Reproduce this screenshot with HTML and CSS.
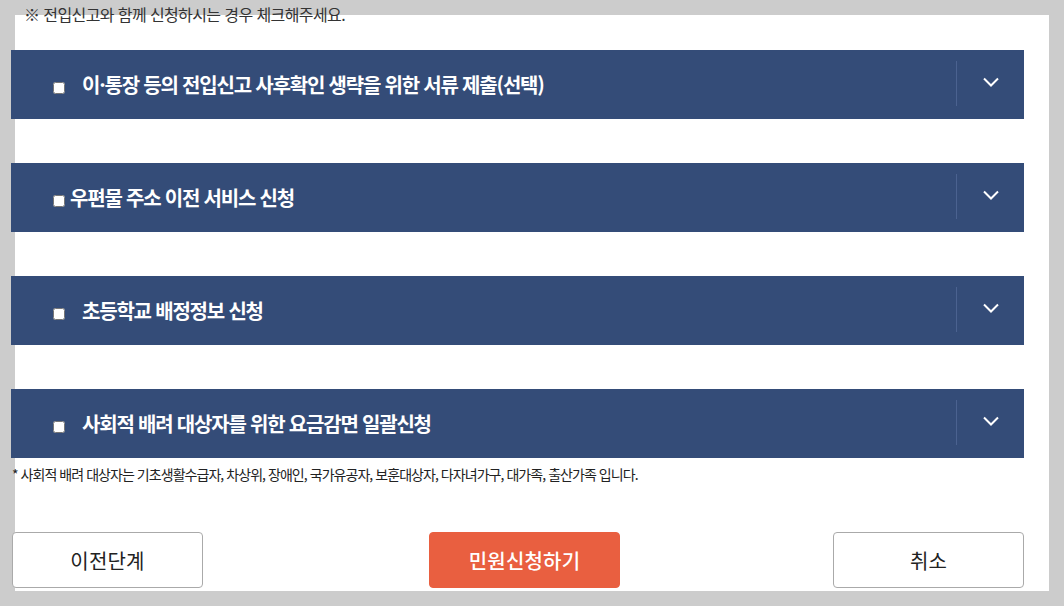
FILE: index.html
```html
<!DOCTYPE html>
<html lang="ko">
<head>
<meta charset="utf-8">
<title>민원신청</title>
<link rel="stylesheet" href="styles.css">
</head>
<body>
<div class="panel">
  <p class="note">※ 전입신고와 함께 신청하시는 경우 체크해주세요.</p>
  <div class="content">
    <ul class="bars">
      <li class="bar">
        <label class="bar-label"><input type="checkbox" class="chk"><span class="bar-title spaced">이·통장 등의 전입신고 사후확인 생략을 위한 서류 제출(선택)</span></label>
        <span class="toggle"><svg width="16" height="10" viewBox="0 0 16 10"><polyline points="1,1.5 8,8.5 15,1.5" fill="none" stroke="#fff" stroke-width="2"/></svg></span>
      </li>
      <li class="bar">
        <label class="bar-label"><input type="checkbox" class="chk"><span class="bar-title tight">우편물 주소 이전 서비스 신청</span></label>
        <span class="toggle"><svg width="16" height="10" viewBox="0 0 16 10"><polyline points="1,1.5 8,8.5 15,1.5" fill="none" stroke="#fff" stroke-width="2"/></svg></span>
      </li>
      <li class="bar">
        <label class="bar-label"><input type="checkbox" class="chk"><span class="bar-title spaced">초등학교 배정정보 신청</span></label>
        <span class="toggle"><svg width="16" height="10" viewBox="0 0 16 10"><polyline points="1,1.5 8,8.5 15,1.5" fill="none" stroke="#fff" stroke-width="2"/></svg></span>
      </li>
      <li class="bar">
        <label class="bar-label"><input type="checkbox" class="chk"><span class="bar-title spaced">사회적 배려 대상자를 위한 요금감면 일괄신청</span></label>
        <span class="toggle"><svg width="16" height="10" viewBox="0 0 16 10"><polyline points="1,1.5 8,8.5 15,1.5" fill="none" stroke="#fff" stroke-width="2"/></svg></span>
      </li>
    </ul>
    <p class="footnote">* 사회적 배려 대상자는 기초생활수급자, 차상위, 장애인, 국가유공자, 보훈대상자, 다자녀가구, 대가족, 출산가족 입니다.</p>
    <div class="actions">
      <button class="btn btn-line">이전단계</button>
      <button class="btn btn-main">민원신청하기</button>
      <button class="btn btn-line btn-right">취소</button>
    </div>
  </div>
</div>
</body>
</html>
```
FILE: styles.css
```css
* { box-sizing: border-box; }
html, body { margin: 0; padding: 0; }
body {
  background: #cccccc;
  font-family: "Noto Sans CJK KR", "Noto Sans", sans-serif;
  color: #222;
}
.panel {
  display: flex;
  flex-direction: column;
  margin: 15px 15px 0 15px;
  background: #ffffff;
  padding-bottom: 3px;
}
.note {
  margin: -12px 0 0 9px;
  font-size: 16px;
  line-height: 22px;
  letter-spacing: -0.6px;
  color: #333;
}
.content {
  margin-left: -4px;
  width: 1013px;
}
.bars {
  list-style: none;
  margin: 25px 0 0 0;
  padding: 0;
  display: flex;
  flex-direction: column;
  gap: 44px;
}
.bar {
  height: 69px;
  background: #344c78;
  display: flex;
  align-items: center;
  justify-content: space-between;
}
.bar-label {
  display: flex;
  align-items: center;
  padding-left: 42px;
}
.chk {
  width: 12px;
  height: 12px;
  margin: 7px 0 0 0;
}
.bar-title {
  color: #fff;
  font-weight: 700;
  font-size: 20px;
  letter-spacing: -1.2px;
}
.spaced { margin-left: 17px; }
.tight { margin-left: 5px; }
.toggle {
  width: 68px;
  height: 45px;
  border-left: 1px solid #4b6290;
  display: flex;
  align-items: center;
  justify-content: center;
  margin-top: -2px;
  padding-bottom: 3px;
}
.toggle svg { display: block; }
.footnote {
  margin: 7px 0 0 1px;
  font-size: 14px;
  line-height: 19px;
  letter-spacing: -0.95px;
  color: #222;
}
.actions {
  display: flex;
  margin-top: 48px;
  padding-left: 1px;
}
.btn {
  width: 191px;
  height: 56px;
  border-radius: 4px;
  font-family: "Noto Sans CJK KR", "Noto Sans", sans-serif;
  font-size: 20px;
  letter-spacing: 0.2px;
  cursor: pointer;
}
.btn-line {
  background: #fff;
  border: 1px solid #aaaaaa;
  color: #222;
}
.btn-main {
  margin-left: 226px;
  background: #e95f40;
  border: 1px solid #e95f40;
  color: #fff;
  font-weight: 500;
}
.btn-right { margin-left: auto; }
```
